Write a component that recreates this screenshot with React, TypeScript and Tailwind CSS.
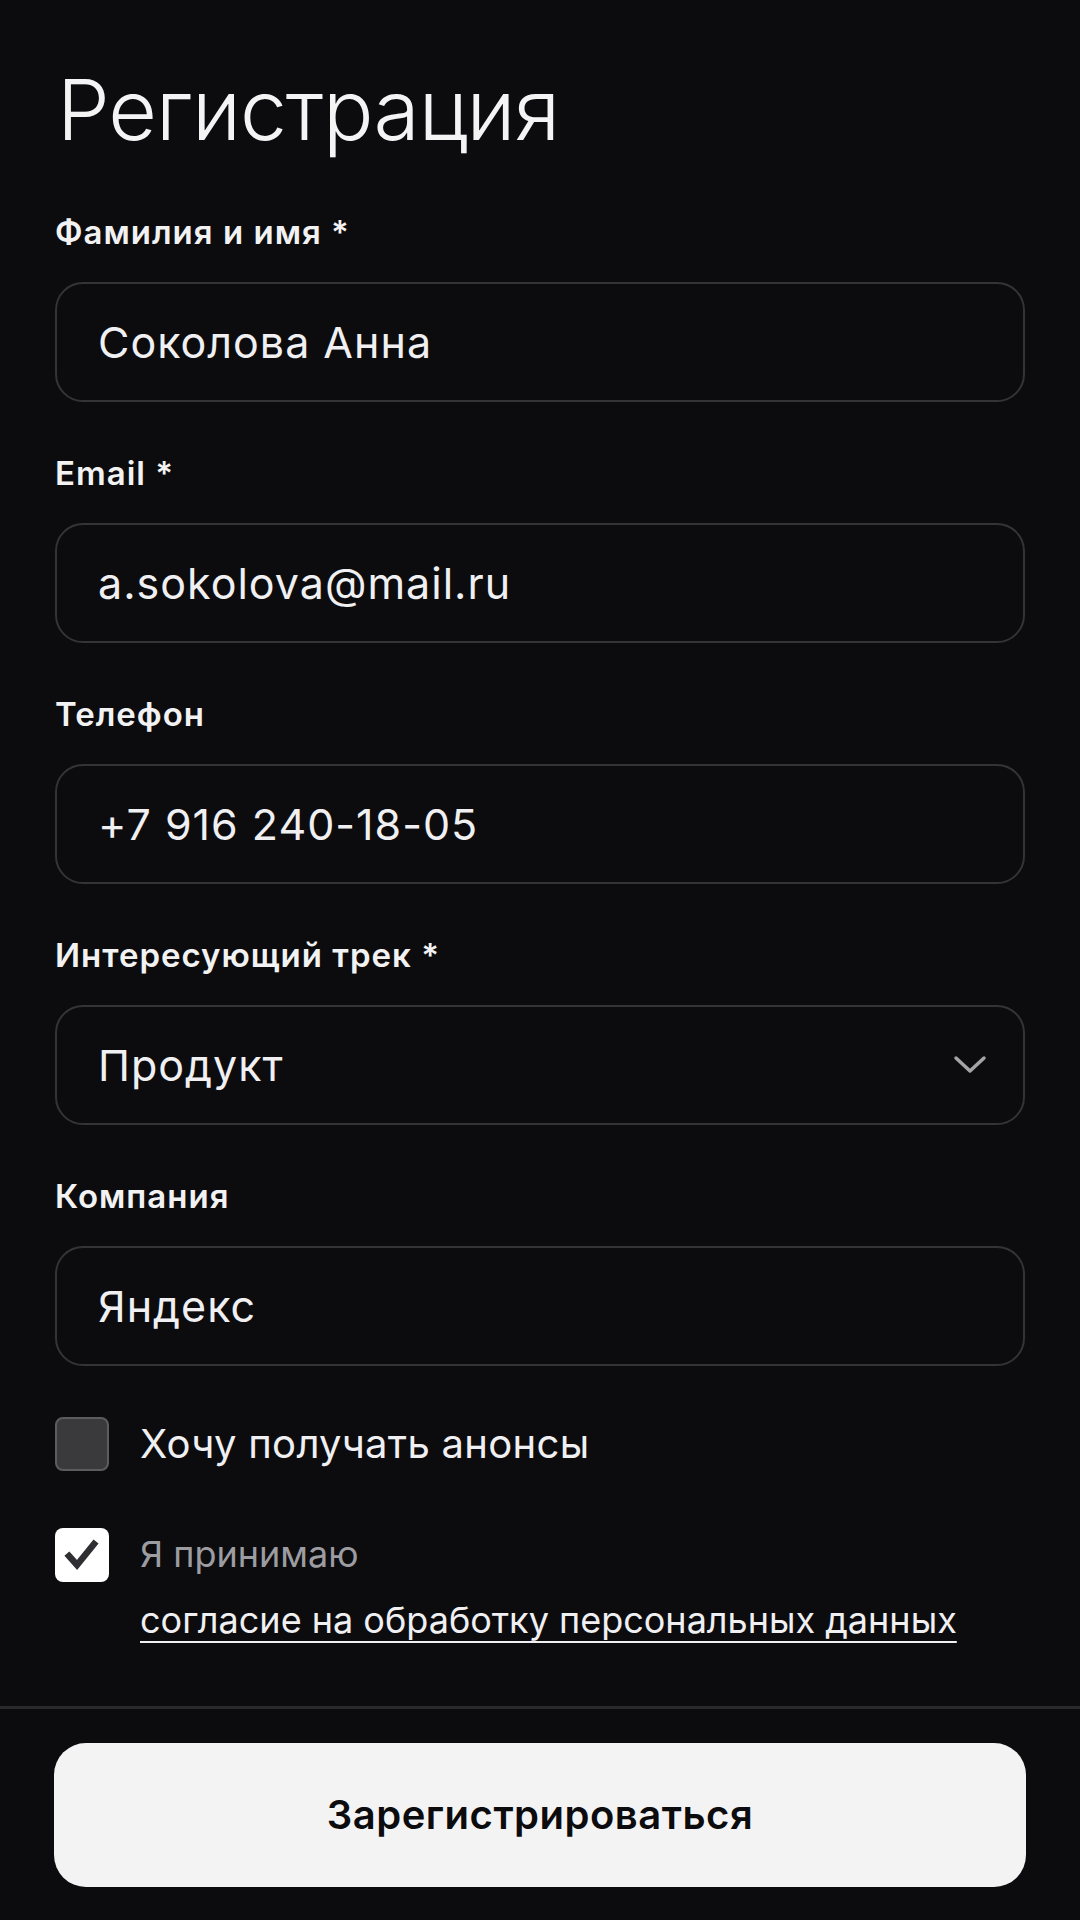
import React from "react";

const fields = [
  { label: "Фамилия и имя *", value: "Соколова Анна" },
  { label: "Email *", value: "a.sokolova@mail.ru" },
  { label: "Телефон", value: "+7 916 240-18-05" },
  { label: "Интересующий трек *", value: "Продукт", select: true },
  { label: "Компания", value: "Яндекс" },
];

const font = "font-['Inter','Noto_Sans',sans-serif]";

export default function App() {
  return (
    <div className={`min-h-[1920px] w-[1080px] bg-[#0c0c0f] flex flex-col ${font}`}>
      <main className="flex-1 flex flex-col px-[55px] pt-[68px]">
        <h1 className="text-[84px] leading-none font-light text-[#f4f4f5] tracking-[-1px] pl-[2px]">
          Регистрация
        </h1>

        <div className="flex flex-col gap-[55px] mt-[64px]">
          {fields.map((f) => (
            <div key={f.label} className="flex flex-col gap-[33px]">
              <label className="text-[33px] leading-none font-semibold tracking-[1px] text-[#f2f2f3]">
                {f.label}
              </label>
              <div className="h-[120px] rounded-[28px] border-2 border-[#333338] flex items-center justify-between pl-[41px] pr-[36px]">
                <span className="text-[43px] font-normal tracking-[1px] text-[#f0f0f2]">{f.value}</span>
                {f.select && (
                  <svg width="34" height="20" viewBox="0 0 34 20" fill="none">
                    <path d="M3 3L17 16L31 3" stroke="#a3a3a8" strokeWidth="3.5" strokeLinecap="round" strokeLinejoin="round" />
                  </svg>
                )}
              </div>
            </div>
          ))}
        </div>

        <div className="flex items-center gap-[31px] mt-[48px]">
          <div className="w-[54px] h-[54px] rounded-[8px] bg-[#3a3a3d] border-2 border-[#5c5c60]" />
          <span className="text-[40px] tracking-[0.3px] text-[#f0f0f2]">Хочу получать анонсы</span>
        </div>

        <div className="flex gap-[31px] mt-[54px]">
          <div className="w-[54px] h-[54px] shrink-0 rounded-[8px] bg-white flex items-center justify-center">
            <svg width="44" height="44" viewBox="0 0 44 44" fill="none">
              <path d="M9 23L17 32L34 11" stroke="#2f2f33" strokeWidth="6.5" strokeLinecap="square" />
            </svg>
          </div>
          <div className="flex flex-col gap-[30px] pt-[8px]">
            <span className="text-[36px] leading-none text-[#9c9ca1]">Я принимаю</span>
            <a className="text-[36px] leading-none text-[#f0f0f2] underline underline-offset-[8px] decoration-2">
              согласие на обработку персональных данных
            </a>
          </div>
        </div>
      </main>

      <footer className="border-t-[3px] border-[#2a2a2e] px-[54px] pt-[34px] pb-[33px]">
        <button className="w-full h-[144px] rounded-[32px] bg-[#f3f3f4] text-[40px] font-semibold tracking-[0.5px] text-[#0c0c0f]">
          Зарегистрироваться
        </button>
      </footer>
    </div>
  );
}
